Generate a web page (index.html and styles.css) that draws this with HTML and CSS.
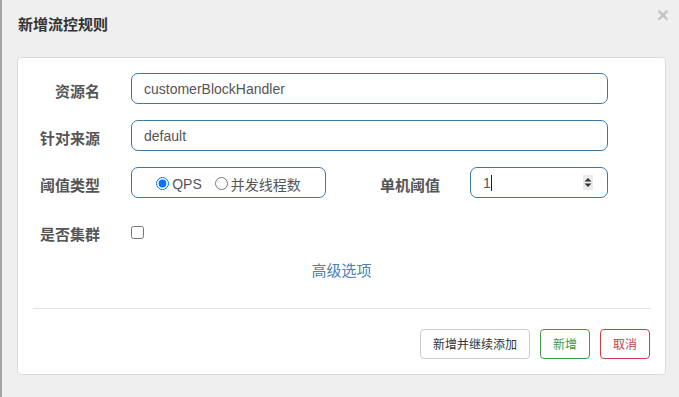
FILE: index.html
```html
<!DOCTYPE html>
<html lang="zh-CN">
<head>
  <meta charset="UTF-8" />
  <meta name="viewport" content="width=device-width, initial-scale=1.0"/>
  <title>新增流控规则</title>
  <link rel="stylesheet" href="styles.css">
</head>
<body>
  <div class="modal">
    <div class="modal-header">
      <h4 class="modal-title">新增流控规则</h4>
      <span class="close">&times;</span>
    </div>

    <div class="modal-body">
      <div class="form-row">
        <label class="form-label" for="resource">资源名</label>
        <input class="form-input" type="text" id="resource" value="customerBlockHandler" />
      </div>

      <div class="form-row">
        <label class="form-label" for="limitApp">针对来源</label>
        <input class="form-input" type="text" id="limitApp" value="default" />
      </div>

      <div class="form-row">
        <label class="form-label">阈值类型</label>
        <div class="split">
          <div class="radio-box">
            <label class="radio"><input type="radio" name="grade" checked /> QPS</label>
            <label class="radio"><input type="radio" name="grade" /> 并发线程数</label>
          </div>
          <label class="form-label sub-label" for="count">单机阈值</label>
          <div class="num-wrap">
            <input class="form-input" type="text" id="count" value="1" />
            <span class="caret"></span>
            <span class="spinner">
              <svg width="10" height="15" viewBox="0 0 10 15">
                <path d="M5 3 L8.5 6.5 L1.5 6.5 Z" fill="#333"/>
                <path d="M5 12 L8.5 8.5 L1.5 8.5 Z" fill="#333"/>
              </svg>
            </span>
          </div>
        </div>
      </div>

      <div class="form-row">
        <label class="form-label" for="cluster">是否集群</label>
        <div><input class="check" type="checkbox" id="cluster" /></div>
      </div>

      <div class="advanced"><a href="#">高级选项</a></div>

      <hr class="divider">

      <div class="footer">
        <button class="btn btn-default">新增并继续添加</button>
        <button class="btn btn-success">新增</button>
        <button class="btn btn-danger">取消</button>
      </div>
    </div>
  </div>
</body>
</html>
```

FILE: styles.css
```css
body {
  margin: 0;
  background: #efefef;
  font-family: "Liberation Sans", "Noto Sans CJK SC", Arial, sans-serif;
  color: #333;
  height: 397px;
  border-left: 2px solid #a3a3a3;
  box-sizing: border-box;
}
.modal-header {
  display: flex;
  justify-content: space-between;
  align-items: flex-start;
  height: 57px;
  padding: 0 10px 0 16px;
  box-sizing: border-box;
}
.modal-title {
  margin: 15px 0 0;
  font-size: 15px;
  line-height: 20px;
  font-weight: bold;
  color: #333;
}
.close {
  margin-top: 4px;
  font-size: 21px;
  font-weight: bold;
  line-height: 1;
  color: #c4c4c4;
}
.modal-body {
  margin-left: 15px;
  width: 649px;
  box-sizing: border-box;
  background: #fff;
  border: 1px solid #dcdcdc;
  border-radius: 4px;
  padding: 15px 15px 15px 15px;
}
.form-row {
  display: grid;
  grid-template-columns: 67px 477px;
  column-gap: 31px;
  align-items: center;
  margin-bottom: 16px;
  min-height: 31px;
}
.form-row:nth-child(4) {
  margin-top: 18px;
  margin-bottom: 0;
}
.form-label {
  font-size: 15px;
  font-weight: bold;
  color: #555;
  text-align: right;
  padding-top: 3px;
}
.form-input {
  width: 100%;
  height: 31px;
  box-sizing: border-box;
  border: 1px solid #3d78a6;
  border-radius: 7px;
  padding: 0 12px;
  font-family: "Liberation Sans", "Noto Sans CJK SC", sans-serif;
  font-size: 14px;
  color: #555;
  outline: none;
}
.split {
  display: flex;
  align-items: center;
}
.radio-box {
  width: 195px;
  height: 31px;
  box-sizing: border-box;
  border: 1px solid #3d78a6;
  border-radius: 7px;
  display: flex;
  align-items: center;
  justify-content: center;
  gap: 13px;
}
.radio {
  display: flex;
  align-items: center;
  font-size: 14px;
  color: #555;
  padding-top: 2px;
}
.radio input {
  width: 13px;
  height: 13px;
  margin: 0 3px 0 0;
}
.sub-label {
  width: 114px;
  box-sizing: border-box;
}
.num-wrap {
  position: relative;
  width: 138px;
  margin-left: 30px;
}
.caret {
  position: absolute;
  left: 21px;
  top: 8px;
  width: 1px;
  height: 16px;
  background: #222;
}
.spinner {
  position: absolute;
  right: 15px;
  top: 8px;
  width: 10px;
  height: 15px;
  background: #ebebeb;
  display: flex;
}
.check {
  width: 13px;
  height: 13px;
  margin: 2px 0 0;
  display: block;
}
.advanced {
  text-align: center;
  margin-top: 14px;
  line-height: 20px;
}
.advanced a {
  font-size: 15px;
  color: #4a80b4;
  text-decoration: none;
}
.divider {
  border: 0;
  border-top: 1px solid #e2e2e2;
  margin: 27px 0 20px;
}
.footer {
  display: flex;
  justify-content: flex-end;
  gap: 10px;
}
.btn {
  font-family: "Noto Sans CJK SC", sans-serif;
  font-size: 12px;
  line-height: 18px;
  padding: 5px 12px;
  border-radius: 4px;
  background: #fff;
  border: 1px solid #ccc;
  color: #333;
  cursor: pointer;
}
.btn-success {
  border-color: #3f9a43;
  color: #3f9a43;
}
.btn-danger {
  border-color: #c9414a;
  color: #c9414a;
}
```
